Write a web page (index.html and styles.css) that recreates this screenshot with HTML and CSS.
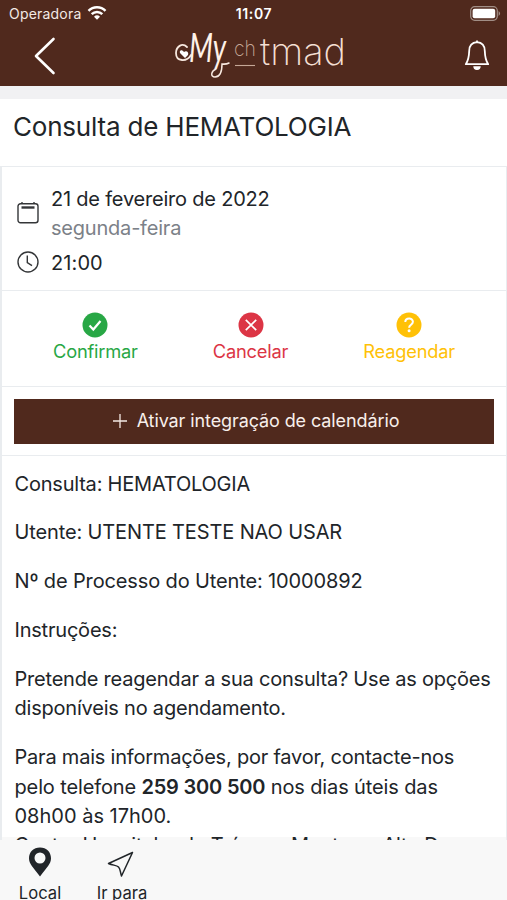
FILE: index.html
```html
<!DOCTYPE html>
<html lang="pt">
<head>
<meta charset="utf-8">
<title>Consulta</title>
<link rel="stylesheet" href="styles.css">
</head>
<body>
<div class="app">
  <header class="header">
    <div class="status">
      <span class="carrier"><span class="operator">Operadora</span>
        <svg width="20" height="16" viewBox="0 0 20 16" fill="none" stroke="#fff" stroke-width="2.5"><path d="M1.5 5.8a12 12 0 0 1 17 0M4.7 9.1a7.6 7.6 0 0 1 10.6 0"/><path d="M10 14.7l-3-3a4.3 4.3 0 0 1 6 0z" fill="#fff" stroke="none"/></svg>
      </span>
      <span class="clock">11:07</span>
      <svg class="battery" width="31" height="15" viewBox="0 0 31 15"><rect x=".7" y=".7" width="26.6" height="13.6" rx="4" fill="none" stroke="#a18e86" stroke-width="1.2"/><rect x="2.6" y="2.8" width="22.6" height="9.4" rx="2" fill="#fff"/><path d="M28.6 5q3 2.5 0 5z" fill="#a18e86"/></svg>
    </div>
    <nav class="nav">
      <svg class="back" width="22" height="38" viewBox="0 0 22 38" fill="none" stroke="#fff" stroke-width="2.6" stroke-linecap="round" stroke-linejoin="round"><path d="M19.5 2L2 19l17.5 17"/></svg>
      <svg class="logo" width="174" height="52" viewBox="0 0 174 52">
        <g fill="none" stroke="#f7e8df" stroke-linecap="round"><path d="M13 17C8 12 2 17 2 23c0 9 11 9 15 2" stroke-width="1.8"/><path d="M42 39c-5 2-6 8-1 8 5 0 7-6 7-13q4 .5 7-1" stroke-width="1.5"/></g>
        <path d="M11 28l-5-5c-1-3 2-4 4-1 3-2 5 1 4 3z" fill="#fff"/>
        <text class="logo-script" x="15" y="32" textLength="37" lengthAdjust="spacingAndGlyphs">My</text>
        <text class="logo-small" x="60" y="26" textLength="22" lengthAdjust="spacingAndGlyphs">ch</text>
        <path d="M61 35.5h20" stroke="#c5a797" stroke-width="1.1"/>
        <text class="logo-main" x="86" y="35" textLength="86" lengthAdjust="spacingAndGlyphs">tmad</text>
      </svg>
      <svg class="bell" width="26" height="31" viewBox="0 0 26 31" fill="none" stroke="#fff" stroke-width="1.8" stroke-linejoin="round"><path d="M13 2.2C8 2.5 5.3 6 5.2 11 5 18 4 21 1.8 24.2h22.4C22 21 21 18 20.8 11 20.7 6 18 2.5 13 2.2zM13 .6v2"/><path d="M9.3 26.2h7.4a3.7 3.7 0 0 1-7.4 0z" fill="#fff" stroke="none"/></svg>
    </nav>
  </header>
  <h1 class="title"><span>Consulta de HEMATOLOGIA</span></h1>
  <main class="card">
    <section class="when">
      <svg class="calendar" width="22" height="22" viewBox="0 0 22 22" fill="none" stroke="#343638" stroke-width="1.4"><rect x="1" y="1.8" width="20" height="19" rx="2.5"/><path d="M4.5 5.5h13" stroke-width="2.4"/><path d="M5 0v2M17 0v2"/></svg>
      <div class="date"><div>21 de fevereiro de 2022</div><div class="muted">segunda-feira</div></div>
      <svg class="time-icon" width="22" height="22" viewBox="0 0 22 22" fill="none" stroke="#343638" stroke-width="1.4"><circle cx="11" cy="11" r="10"/><path d="M10.3 4.5v7.2l4.7 3"/></svg>
      <div class="time">21:00</div>
    </section>
    <section class="actions">
      <div class="action confirm"><svg width="26" height="26" viewBox="0 0 26 26"><circle cx="13" cy="13" r="12.5" fill="currentColor"/><path d="M7.5 13.6l3.8 3.9 7.2-8.5" fill="none" stroke="#fff" stroke-width="2.2"/></svg><span>Confirmar</span></div>
      <div class="action cancel"><svg width="26" height="26" viewBox="0 0 26 26"><circle cx="13" cy="13" r="12.5" fill="currentColor"/><path d="M7.8 7.8l10.4 10.4M18.2 7.8L7.8 18.2" fill="none" stroke="#fff" stroke-width="1.7"/></svg><span>Cancelar</span></div>
      <div class="action reschedule"><svg width="26" height="26" viewBox="0 0 26 26"><circle cx="13" cy="13" r="12.5" fill="currentColor"/><path d="M9.3 10c0-4.5 7.6-4.5 7.6-.3 0 3-3.8 3-3.8 6" fill="none" stroke="#fff" stroke-width="2"/><circle cx="13.1" cy="18.7" r="1.5" fill="#fff"/></svg><span>Reagendar</span></div>
    </section>
    <section class="integration">
      <div class="button"><svg width="14" height="14" viewBox="0 0 14 14" stroke="#f4e9e4" stroke-width="1.3"><path d="M0 7h14M7 0v14"/></svg><span>Ativar integração de calendário</span></div>
    </section>
    <section class="details">
      <p>Consulta: HEMATOLOGIA</p>
      <p class="wide">Utente: UTENTE TESTE NAO USAR</p>
      <p class="wide">Nº de Processo do Utente: 10000892</p>
      <p>Instruções:</p>
      <p>Pretende reagendar a sua consulta? Use as opções<br>disponíveis no agendamento.</p>
      <p class="last">Para mais informações, por favor, contacte-nos<br><span class="wide">pelo telefone <b>259 300 500</b> nos dias úteis das</span><br><span class="hours">08h00 às 17h00.</span></p>
      <p>Centro Hospitalar de Trás-os-Montes e Alto Douro</p>
    </section>
  </main>
  <footer class="tabs">
    <div class="tab local"><svg width="24" height="30" viewBox="0 0 24 30"><path d="M12 .5C5.5.5 1 5 1 11.2 1 17 5 20 12 29.5 19 20 23 17 23 11.2 23 5 18.5.5 12 .5zM12 5.500a5.500 5.500 0 1 1 0 11 5.500 5.500 0 0 1 0-11z" fill="#212529" fill-rule="evenodd"/></svg><span>Local</span></div>
    <div class="tab route"><svg width="27" height="27" viewBox="0 0 27 27" fill="none" stroke="#212529" stroke-width="1.5" stroke-linejoin="round"><path d="M25.5 1.5L1.5 12.5c4.500 2 8 1.500 10 3.500s1.500 4.500 3 9z"/></svg><span>Ir para</span></div>
  </footer>
</div>
</body>
</html>
```
FILE: styles.css
```css
* { box-sizing: border-box; }
body { margin: 0; font-family: Inter, "Liberation Sans", sans-serif; color: #212529; background: #fff; overflow: hidden; }
svg { display: block; flex: none; overflow: visible; }
.app { width: 507px; height: 900px; display: flex; flex-direction: column; overflow: hidden; }
.header { height: 99px; flex: none; background: #50291d; border-bottom: 13px solid #f1f1f3; color: #fff; }
.status { height: 28px; display: grid; grid-template-columns: 1fr auto 1fr; align-items: center; padding: 0 8px 0 9px; font-size: 14px; }
.carrier { display: flex; align-items: center; gap: 6px; color: #f3e9e5; letter-spacing: .2px; margin-top: -1px; }
.carrier svg { margin-top: -2px; }
.clock { font-weight: 600; letter-spacing: .6px; margin-top: -1px; }
.battery { justify-self: end; margin: -2px -2px 0 0; }
.nav { height: 58px; display: grid; grid-template-columns: 140px 174px 1fr; align-items: center; padding: 0 17px 0 34px; }
.back { margin-top: -2px; }
.logo { margin-top: -3px; }
.bell { justify-self: end; margin-top: -4px; }
.logo-script { font: italic 400 40px Lato, sans-serif; fill: #fff1e8; }
.logo-small { font: 200 22px Inter, sans-serif; fill: #c5a797; }
.logo-main { font: 200 37px Inter, sans-serif; fill: #f4dfd3; }
.title { height: 67px; flex: none; margin: 0; padding: 11px 13px 0; font-size: 26px; line-height: 34px; font-weight: 400; letter-spacing: -.2px; }
.card { height: 674px; flex: none; overflow: hidden; border: solid #e9ecef; border-width: 1px 1px 0 2px; font-size: 20px; line-height: 29.3px; letter-spacing: -.21px; white-space: nowrap; background: linear-gradient(#fff 670px, #f8f8f8 670px); }
.when { height: 123px; padding: 18px 15px 0; display: grid; grid-template-columns: 22px 1fr; grid-template-rows: 59px 34px; column-gap: 12px; }
.calendar { margin-top: 17px; }
.time-icon { margin-top: 7px; }
.time { padding-top: 4.5px; letter-spacing: .1px; }
.muted { color: #7c8188; }
.actions { height: 97px; border-top: 1px solid #e9ecef; border-bottom: 1px solid #e9ecef; padding: 21px 51px 0; display: flex; justify-content: space-between; }
.action { display: flex; flex-direction: column; align-items: center; font-size: 18.3px; line-height: 26px; }
.confirm { color: #28a745; }
.cancel { color: #dc3545; }
.reschedule { color: #ffc107; }
.integration { padding: 12px 12px 11px; border-bottom: 1px solid #e9ecef; }
.button { height: 45px; display: flex; align-items: center; justify-content: center; gap: 10px; padding-left: 4px; background: #50291d; color: #f8efeb; font-size: 18px; letter-spacing: -.1px; }
.button svg { margin-top: -2px; }
.button span { margin-top: -1px; }
.details { padding: 13.6px 12px 0 12.5px; }
.details p { margin: 0 0 19.6px; }
.details p.last { margin: 0; }
.wide { letter-spacing: -.13px; }
.hours { letter-spacing: 0; }
.details b { font-weight: 600; letter-spacing: -.2px; }
.tabs { height: 60px; flex: none; background: #f8f8f8; display: flex; font-size: 16.6px; line-height: 24px; }
.tab { display: flex; flex-direction: column; align-items: center; white-space: nowrap; }
.local { width: 80px; padding-top: 7px; }
.local span { margin-top: 4px; }
.route { width: 84px; padding-top: 11px; }
.route svg { margin-left: -3px; }
.route span { margin-top: 3px; }
```
